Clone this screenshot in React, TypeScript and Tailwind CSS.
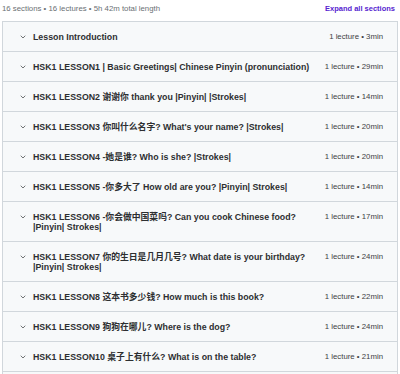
import { ChevronDown } from 'lucide-react';

type Section = { title: string; meta: string };

const sections: Section[] = [
  { title: 'Lesson Introduction', meta: '1 lecture • 3min' },
  { title: 'HSK1 LESSON1 | Basic Greetings| Chinese Pinyin (pronunciation)', meta: '1 lecture • 29min' },
  { title: 'HSK1 LESSON2 谢谢你 thank you |Pinyin| |Strokes|', meta: '1 lecture • 14min' },
  { title: "HSK1 LESSON3 你叫什么名字? What's your name? |Strokes|", meta: '1 lecture • 20min' },
  { title: 'HSK1 LESSON4 -她是谁? Who is she? |Strokes|', meta: '1 lecture • 20min' },
  { title: 'HSK1 LESSON5 -你多大了 How old are you? |Pinyin| Strokes|', meta: '1 lecture • 14min' },
  { title: 'HSK1 LESSON6 -你会做中国菜吗? Can you cook Chinese food? |Pinyin| Strokes|', meta: '1 lecture • 17min' },
  { title: 'HSK1 LESSON7 你的生日是几月几号? What date is your birthday? |Pinyin| Strokes|', meta: '1 lecture • 24min' },
  { title: 'HSK1 LESSON8 这本书多少钱? How much is this book?', meta: '1 lecture • 22min' },
  { title: 'HSK1 LESSON9 狗狗在哪儿? Where is the dog?', meta: '1 lecture • 24min' },
  { title: 'HSK1 LESSON10 桌子上有什么? What is on the table?', meta: '1 lecture • 21min' },
];

function SectionRow({ s }: { s: Section }) {
  return (
    <div className="flex items-start border-t border-[#d1d7dc] bg-[#f7f9fa] pl-[16px] pr-[14px] pt-[10px] pb-[9px]">
      <ChevronDown className="mt-[1px] h-[8px] w-[8px] shrink-0 text-[#2d2f31]" strokeWidth={2} />
      <div className="ml-[6px] flex-1 text-[8.8px] font-bold leading-[10px] text-[#2d2f31]">{s.title}</div>
      <div className="ml-[8px] shrink-0 whitespace-nowrap text-[7.8px] leading-[10px] text-[#3e4143]">{s.meta}</div>
    </div>
  );
}

export default function App() {
  return (
    <div
      className="h-[374px] w-[400px] overflow-hidden bg-white pl-[2px] pr-[2px]"
      style={{ fontFamily: '"Liberation Sans", "Noto Sans CJK SC", sans-serif' }}
    >
      <div className="flex h-[21px] items-center justify-between pb-[3px]">
        <span className="text-[7.8px] text-[#6a6f73]">16 sections • 16 lectures • 5h 42m total length</span>
        <span className="pr-[3px] text-[7.5px] font-bold text-[#5624d0]">Expand all sections</span>
      </div>
      <div className="border-x border-b border-[#d1d7dc]">
        {sections.map((s) => (
          <SectionRow key={s.title} s={s} />
        ))}
        <div className="h-[8px] border-t border-[#d1d7dc] bg-[#f7f9fa]" />
      </div>
    </div>
  );
}
